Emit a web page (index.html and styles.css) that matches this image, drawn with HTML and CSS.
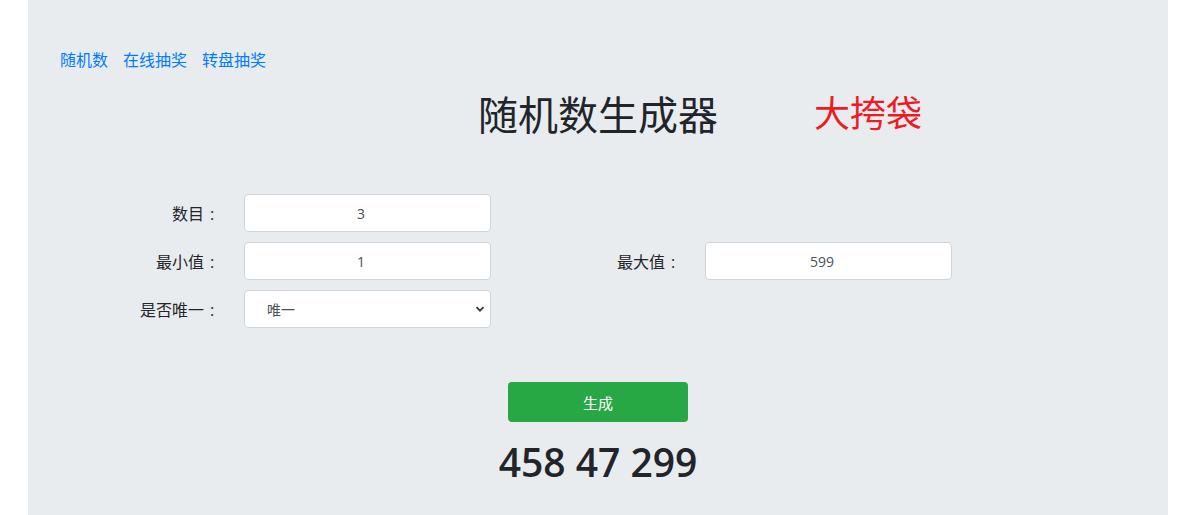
FILE: index.html
```html
<!DOCTYPE html>
<html lang="zh">
<head>
  <meta charset="UTF-8">
  <meta name="viewport" content="width=device-width, initial-scale=1.0">
  <title>随机数生成器</title>
  <link rel="stylesheet" href="styles.css">
</head>
<body>
  <div class="jumbotron">
    <nav class="links">
      <a href="#">随机数</a>
      <a href="#">在线抽奖</a>
      <a href="#">转盘抽奖</a>
    </nav>

    <div class="head">
      <h1>随机数生成器</h1>
      <a class="promo" href="#">大挎袋</a>
    </div>

    <form class="gen-form">
      <label for="count">数目<span class="colon">:</span></label>
      <input id="count" type="text" value="3">
      <span></span><span></span>

      <label for="min">最小值<span class="colon">:</span></label>
      <input id="min" type="text" value="1">
      <label for="max">最大值<span class="colon">:</span></label>
      <input id="max" type="text" value="599">

      <label for="unique">是否唯一<span class="colon">:</span></label>
      <div class="select-wrap">
        <select id="unique">
          <option>唯一</option>
          <option>不唯一</option>
        </select>
        <svg class="chevron" width="10" height="10" viewBox="0 0 10 10"><path d="M1.5 3.2 L5 6.7 L8.5 3.2" fill="none" stroke="#343a40" stroke-width="1.8"/></svg>
      </div>
    </form>

    <div class="actions">
      <button type="button" id="gen">生成</button>
    </div>
    <div class="result" id="result">458 47 299</div>
  </div>
</body>
</html>
```

FILE: styles.css
```css
body {
  margin: 0;
  background: #fff;
  font-family: "Open Sans", "Noto Sans CJK SC", sans-serif;
  color: #212529;
}
.jumbotron {
  width: 1140px;
  margin-left: 28px;
  min-height: 515px;
  box-sizing: border-box;
  background: #e9ecef;
  padding: 48px 32px 0;
}
.links {
  display: flex;
  gap: 15px;
  line-height: 24px;
  font-size: 16px;
}
.links a {
  color: #007bff;
  text-decoration: none;
}
.head {
  display: grid;
  grid-template-columns: 1fr auto 1fr;
  align-items: center;
  margin-top: 19px;
  margin-left: -32px;
  margin-right: -32px;
}
.head h1 {
  grid-column: 2;
  margin: 0;
  font-size: 40px;
  font-weight: 400;
  line-height: 48px;
}
.promo {
  grid-column: 3;
  padding-left: 96px;
  margin-bottom: 2px;
  color: #ed1c24;
  font-size: 36px;
  line-height: 44px;
  text-decoration: none;
}
.gen-form {
  display: grid;
  grid-template-columns: 192px 247px 166px 247px;
  column-gap: 24px;
  row-gap: 10px;
  margin: 55px 0 0 -32px;
  font-size: 16px;
}
.gen-form label {
  text-align: right;
  align-self: center;
}
.colon {
  display: inline-block;
  width: 16px;
  text-align: center;
}
.gen-form input,
.gen-form select {
  height: 38px;
  box-sizing: border-box;
  border: 1px solid #ced4da;
  border-radius: 4px;
  background: #fff;
  font-family: inherit;
  font-size: 14px;
  color: #495057;
}
.gen-form input {
  text-align: center;
  padding: 0 25px 0 12px;
}
.select-wrap {
  position: relative;
}
.gen-form select {
  width: 100%;
  appearance: none;
  padding: 0 22px;
}
.chevron {
  position: absolute;
  right: 6px;
  top: 14px;
  pointer-events: none;
}
.actions {
  display: flex;
  justify-content: center;
  margin-top: 54px;
  margin-left: -32px;
  margin-right: -32px;
}
#gen {
  width: 180px;
  height: 40px;
  border: none;
  border-radius: 4px;
  background: #28a745;
  color: #fff;
  font-family: inherit;
  font-size: 15px;
  cursor: pointer;
}
.result {
  margin: 16px -32px 0;
  text-align: center;
  font-size: 39px;
  font-weight: 600;
  line-height: 48px;
}
```
